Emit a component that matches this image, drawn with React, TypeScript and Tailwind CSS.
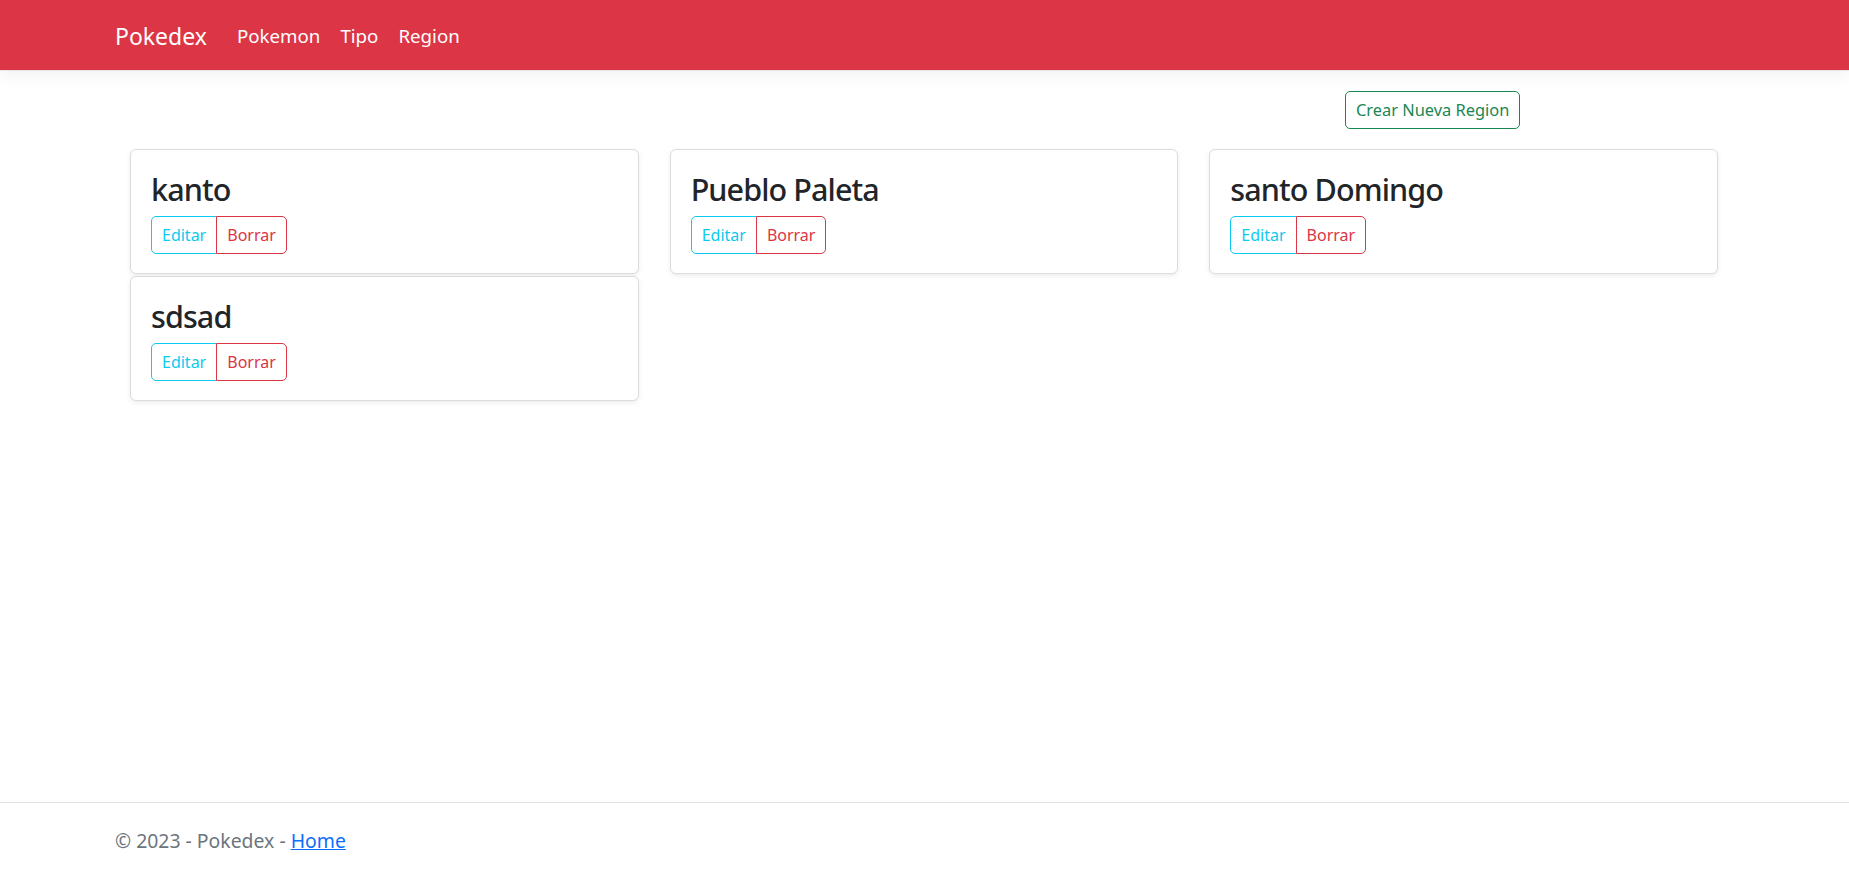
import React from "react";

const regions = ["kanto", "Pueblo Paleta", "santo Domingo", "sdsad"];

function RegionCard({ name }: { name: string }) {
  return (
    <div className="h-[125px] bg-white border border-[#dcdcdc] rounded-[6px] shadow-[0_2px_5px_rgba(0,0,0,0.075)] px-[20px] pt-[20px]">
      <h3 className="-mt-[2px] mb-[6px] text-[30.5px] font-medium leading-[42px] text-[#212529] tracking-[-0.9px]">{name}</h3>
      <div className="flex">
        <button className="h-[38px] px-[10px] text-[16px] leading-[26px] text-[#0dcaf0] border border-[#0dcaf0] rounded-l-[5px] bg-white">
          Editar
        </button>
        <button className="h-[38px] px-[10px] -ml-px text-[16px] leading-[26px] text-[#dc3545] border border-[#dc3545] rounded-r-[5px] bg-white">
          Borrar
        </button>
      </div>
    </div>
  );
}

export default function App() {
  return (
    <div
      className="min-h-screen flex flex-col bg-white"
      style={{ fontFamily: '"Noto Sans", "Open Sans", sans-serif' }}
    >
      <nav className="h-[71px] shrink-0 bg-[#dc3545] border-b border-[#e4e6ea] shadow-[0_5px_15px_rgba(0,0,0,0.05)] flex items-center">
        <div className="pl-[115px] pt-[2px] flex items-center">
          <span className="text-[23px] leading-[37px] text-white mr-[20px]">Pokedex</span>
          <ul className="flex">
            <li className="px-[10px] text-[18.7px] leading-[30px] text-white">Pokemon</li>
            <li className="px-[10px] text-[18.7px] leading-[30px] text-white">Tipo</li>
            <li className="px-[10px] text-[18.7px] leading-[30px] text-white">Region</li>
          </ul>
        </div>
      </nav>

      <main className="flex-1">
        <div className="flex pl-[1345px] pt-[20px]">
          <button className="h-[38px] px-[10px] text-[16.4px] leading-[26px] text-[#198754] border border-[#198754] rounded-[5px] bg-white">
            Crear Nueva Region
          </button>
        </div>
        <div className="ml-[130px] w-[1588px] mt-[20px] grid grid-cols-3 gap-x-[31px] gap-y-[2px]">
          {regions.map((r) => (
            <RegionCard key={r} name={r} />
          ))}
        </div>
      </main>

      <footer className="h-[76px] shrink-0 border-t border-[#dee2e6] pl-[115px] text-[19.4px] leading-[75px] text-[#6c757d] whitespace-nowrap">
        © 2023 - Pokedex - <a href="#" className="text-[#0d6efd] underline">Home</a>
      </footer>
    </div>
  );
}
